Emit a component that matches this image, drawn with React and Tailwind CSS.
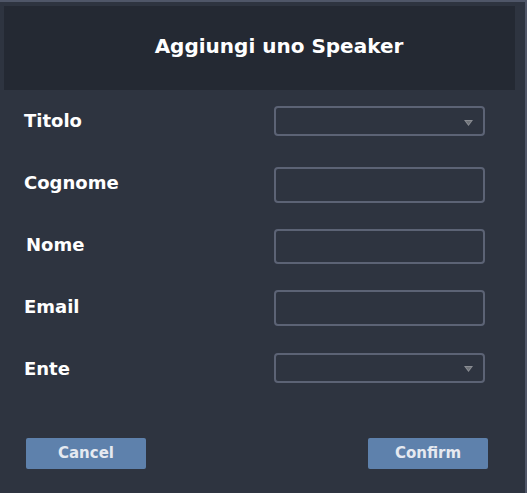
export default function App() {
  const rows = [
    { label: "Titolo", type: "select", h: "h-[30px]", ml: "", mt: "" },
    { label: "Cognome", type: "input", h: "h-[36px]", ml: "", mt: "mt-[4px]" },
    { label: "Nome", type: "input", h: "h-[35px]", ml: "ml-[2px]", mt: "mt-[2px]" },
    { label: "Email", type: "input", h: "h-[36px]", ml: "", mt: "mt-[2px]" },
    { label: "Ente", type: "select", h: "h-[30px]", ml: "", mt: "mt-[-3px]" },
  ];
  return (
    <div
      className="w-[527px] h-[493px] bg-[#2e3440] border-t-2 border-r-2 border-[#4f5668] overflow-hidden"
      style={{ fontFamily: '"DejaVu Sans", Verdana, sans-serif' }}
    >
      <div className="ml-[4px] mt-[4px] w-[511px] h-[84px] bg-[#242933] flex items-center justify-center pl-[39px] pb-[4px]">
        <h1 className="text-[20px] font-bold text-white leading-none">Aggiungi uno Speaker</h1>
      </div>
      <div className="flex flex-col">
        {rows.map((r) => (
          <div key={r.label} className="h-[62px] flex items-center pl-[24px]">
            <span className={`w-[250px] text-[18px] font-bold text-white leading-none ${r.ml}`}>
              {r.label}
            </span>
            <div
              className={`${r.ml ? "-ml-[2px]" : ""} ${r.mt} w-[211px] ${r.h} border-2 border-[#5c6375] rounded-[4px] flex items-center justify-end pr-[10px]`}
            >
              {r.type === "select" && (
                <svg width="9" height="6" viewBox="0 0 9 6" className="mt-[3px]">
                  <polygon points="0,0 9,0 4.5,6" fill="#8a8d93" />
                  <polygon points="2,1 7,1 4.5,4.5" fill="#6f7379" />
                </svg>
              )}
            </div>
          </div>
        ))}
      </div>
      <div className="flex justify-between pl-[26px] pr-[37px] mt-[38px]">
        <button className="w-[120px] h-[31px] bg-[#5e81ac] rounded-[2px] text-[15px] font-bold text-[#e5e9f0] leading-none">
          Cancel
        </button>
        <button className="w-[120px] h-[31px] bg-[#5e81ac] rounded-[2px] text-[15px] font-bold text-[#e5e9f0] leading-none">
          Confirm
        </button>
      </div>
    </div>
  );
}
